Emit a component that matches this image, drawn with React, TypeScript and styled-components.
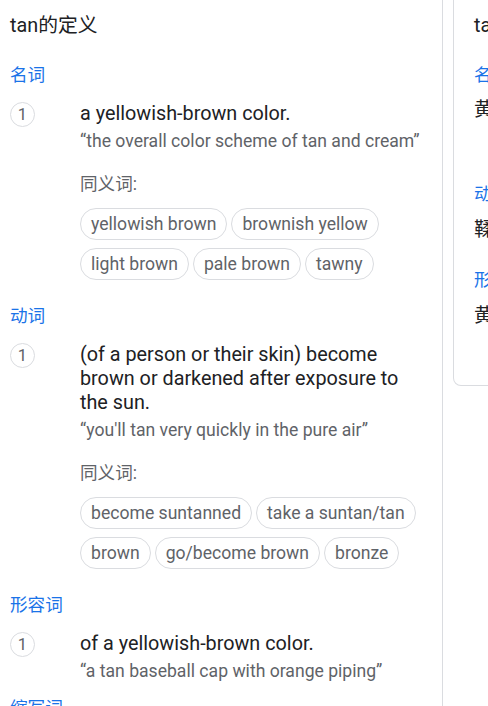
import React from "react";
import styled, { createGlobalStyle } from "styled-components";

const Global = createGlobalStyle`
  html, body { margin: 0; padding: 0; background: #fff; overflow: hidden; }
  body { font-family: Roboto, "Noto Sans CJK SC", Arial, sans-serif; color: #202124; }
`;

const Page = styled.div`
  display: flex;
  align-items: flex-start;
  width: 760px;
  height: 706px;
`;

const Main = styled.div`
  width: 432px;
  height: 692px;
  padding: 14px 0 0 10px;
  border-right: 1px solid #dadce0;
  flex-shrink: 0;
  box-sizing: content-box;
  overflow: hidden;
`;

const Title = styled.div`
  font-size: 19.8px;
  line-height: 24px;
  color: #202124;
`;

const Pos = styled.div<{ $top: number }>`
  font-size: 17.6px;
  line-height: 24px;
  color: #1a73e8;
  margin-top: ${(p) => p.$top}px;
`;

const Sense = styled.div`
  display: flex;
  margin-top: 15px;
`;

const Num = styled.div`
  width: 23px;
  height: 23px;
  border: 1px solid #dadce0;
  border-radius: 50%;
  display: flex;
  align-items: center;
  justify-content: center;
  font-size: 16.5px;
  color: #5f6368;
  flex-shrink: 0;
`;

const Body = styled.div`
  margin-left: 45px;
  width: 342px;
`;

const Def = styled.div`
  font-size: 19.8px;
  line-height: 24px;
  color: #202124;
`;

const Example = styled.div`
  font-size: 17.6px;
  line-height: 22px;
  color: #5f6368;
  margin-top: 4px;
`;

const SynLabel = styled.div`
  font-size: 17.6px;
  line-height: 24px;
  color: #5f6368;
  margin-top: 20px;
`;

const Chips = styled.div`
  display: flex;
  flex-wrap: wrap;
  gap: 8px 4px;
  margin-top: 12px;
`;

const Chip = styled.div`
  height: 30px;
  padding: 0 10px;
  border: 1px solid #dadce0;
  border-radius: 16px;
  font-size: 17.6px;
  line-height: 30px;
  color: #5f6368;
  white-space: nowrap;
`;

const Side = styled.div`
  margin-left: 10px;
  width: 280px;
  height: 386px;
  border: 1px solid #dadce0;
  border-top: none;
  border-radius: 0 0 8px 8px;
  padding: 14px 20px 0 20px;
  box-sizing: border-box;
  flex-shrink: 0;
`;

const SideTr = styled.div<{ $top: number }>`
  font-size: 19.8px;
  line-height: 24px;
  color: #202124;
  margin-top: ${(p) => p.$top}px;
`;

type SenseData = { def: string; ex: string; syn?: string[] };

const SenseBlock = ({ s }: { s: SenseData }) => (
  <Sense>
    <Num>1</Num>
    <Body>
      <Def>{s.def}</Def>
      <Example>{s.ex}</Example>
      {s.syn && (
        <>
          <SynLabel>同义词:</SynLabel>
          <Chips>
            {s.syn.map((c) => (
              <Chip key={c}>{c}</Chip>
            ))}
          </Chips>
        </>
      )}
    </Body>
  </Sense>
);

export default function App() {
  return (
    <>
      <Global />
      <Page>
        <Main>
          <Title>tan的定义</Title>
          <Pos $top={25}>名词</Pos>
          <SenseBlock
            s={{
              def: "a yellowish-brown color.",
              ex: "“the overall color scheme of tan and cream”",
              syn: ["yellowish brown", "brownish yellow", "light brown", "pale brown", "tawny"],
            }}
          />
          <Pos $top={24}>动词</Pos>
          <SenseBlock
            s={{
              def: "(of a person or their skin) become brown or darkened after exposure to the sun.",
              ex: "“you'll tan very quickly in the pure air”",
              syn: ["become suntanned", "take a suntan/tan", "brown", "go/become brown", "bronze"],
            }}
          />
          <Pos $top={24}>形容词</Pos>
          <SenseBlock
            s={{
              def: "of a yellowish-brown color.",
              ex: "“a tan baseball cap with orange piping”",
            }}
          />
          <Pos $top={14}>缩写词</Pos>
        </Main>
        <Side>
          <SideTr $top={0}>tan的翻译</SideTr>
          <Pos $top={25}>名词</Pos>
          <SideTr $top={11}>黄褐色</SideTr>
          <Pos $top={60}>动词</Pos>
          <SideTr $top={12}>鞣</SideTr>
          <Pos $top={26}>形容词</Pos>
          <SideTr $top={12}>黄褐色的</SideTr>
        </Side>
      </Page>
    </>
  );
}
